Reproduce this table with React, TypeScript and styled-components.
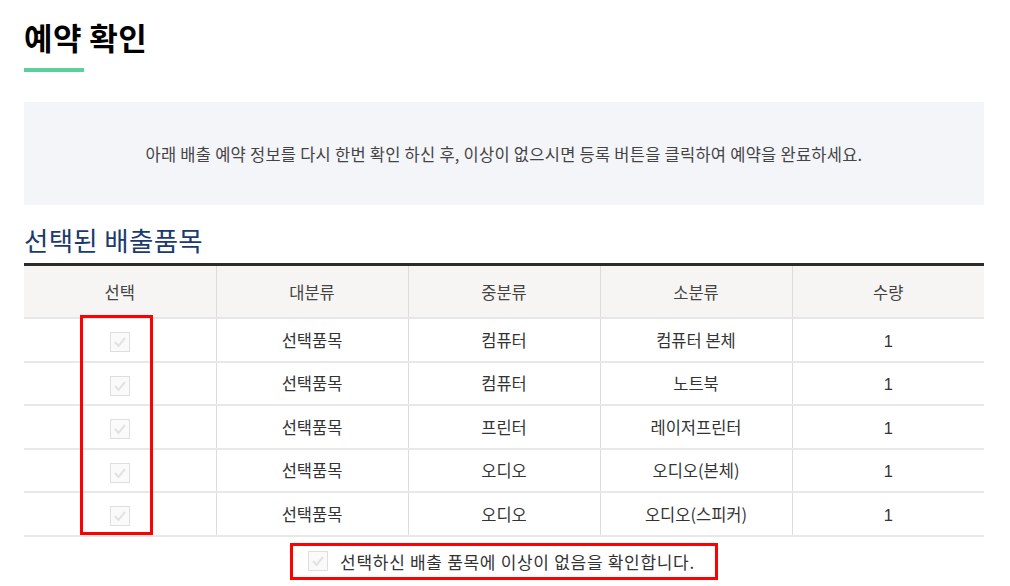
import React from "react";
import styled, { createGlobalStyle } from "styled-components";

const Global = createGlobalStyle`
  html, body { margin: 0; padding: 0; background: #fff; }
  body { font-family: "Noto Sans CJK KR", "Noto Sans", sans-serif; color: #333; }
`;

const Page = styled.div`
  width: 960px;
  padding: 15px 26px 0 24px;
`;

const Title = styled.h1`
  margin: 0;
  font-size: 31px;
  font-weight: 700;
  line-height: 44px;
  color: #000;
  letter-spacing: 0.4px;
`;

const TitleBar = styled.div`
  width: 60px;
  height: 4px;
  background: #5ccf9f;
  margin-top: 9px;
`;

const InfoBox = styled.div`
  margin-top: 30px;
  height: 103px;
  background: #f4f5f9;
  display: flex;
  align-items: center;
  justify-content: center;
  font-size: 16.5px;
  letter-spacing: 0.25px;
  color: #444;
`;

const SectionTitle = styled.h2`
  margin: 16px 0 0;
  font-size: 26.5px;
  font-weight: 400;
  line-height: 38px;
  color: #1b3b6f;
  letter-spacing: 0.3px;
`;

const TableWrap = styled.div`
  position: relative;
  margin-top: 4px;
`;

const Table = styled.table`
  width: 100%;
  border-collapse: collapse;
  table-layout: fixed;
  border-top: 3px solid #2b2b2b;
`;

const Th = styled.th`
  height: 51px;
  padding: 0;
  background: #f6f5f3;
  font-size: 16.5px;
  font-weight: 400;
  color: #444;
  border-bottom: 2px solid #e6e6e6;
  border-left: 1px solid #dcdcdc;
  &:first-child { border-left: none; }
`;

const Td = styled.td`
  height: 41.5px;
  padding: 0;
  text-align: center;
  font-size: 16.5px;
  color: #333;
  border-bottom: 2px solid #e8e8e8;
  border-left: 1px solid #dcdcdc;
  &:first-child { border-left: none; }
`;

const Num = styled.span`
  font-family: "Liberation Sans", Arial, sans-serif;
  font-size: 16.5px;
`;

const Box = styled.span`
  display: inline-flex;
  align-items: center;
  justify-content: center;
  width: 18px;
  height: 18px;
  border: 1px solid #dedede;
  background: #fafafa;
  vertical-align: middle;
`;

const Highlight = styled.div`
  position: absolute;
  left: 56px;
  top: 52px;
  width: 67px;
  height: 214px;
  border: 3px solid #f00;
  pointer-events: none;
`;

const ConfirmRow = styled.div`
  display: flex;
  justify-content: center;
  margin-top: 6px;
`;

const Confirm = styled.label`
  display: flex;
  align-items: center;
  gap: 12px;
  height: 31px;
  padding: 0 20px 0 15px;
  border: 3px solid #f00;
  font-size: 17px;
  letter-spacing: 0.7px;
  color: #333;
`;

const Check = () => (
  <Box>
    <svg width="14" height="12" viewBox="0 0 14 12">
      <path d="M2 6 L5.5 10 L12 2" fill="none" stroke="#e2e2e2" strokeWidth="2" />
    </svg>
  </Box>
);

const rows = [
  ["선택품목", "컴퓨터", "컴퓨터 본체", "1"],
  ["선택품목", "컴퓨터", "노트북", "1"],
  ["선택품목", "프린터", "레이저프린터", "1"],
  ["선택품목", "오디오", "오디오(본체)", "1"],
  ["선택품목", "오디오", "오디오(스피커)", "1"],
];

export default function App() {
  return (
    <Page>
      <Global />
      <Title>예약 확인</Title>
      <TitleBar />
      <InfoBox>
        아래 배출 예약 정보를 다시 한번 확인 하신 후, 이상이 없으시면 등록 버튼을 클릭하여 예약을 완료하세요.
      </InfoBox>
      <SectionTitle>선택된 배출품목</SectionTitle>
      <TableWrap>
        <Table>
          <thead>
            <tr>
              <Th>선택</Th>
              <Th>대분류</Th>
              <Th>중분류</Th>
              <Th>소분류</Th>
              <Th>수량</Th>
            </tr>
          </thead>
          <tbody>
            {rows.map((r, i) => (
              <tr key={i}>
                <Td>
                  <Check />
                </Td>
                <Td>{r[0]}</Td>
                <Td>{r[1]}</Td>
                <Td>{r[2]}</Td>
                <Td>
                  <Num>{r[3]}</Num>
                </Td>
              </tr>
            ))}
          </tbody>
        </Table>
        <Highlight />
      </TableWrap>
      <ConfirmRow>
        <Confirm>
          <Check />
          선택하신 배출 품목에 이상이 없음을 확인합니다.
        </Confirm>
      </ConfirmRow>
    </Page>
  );
}
